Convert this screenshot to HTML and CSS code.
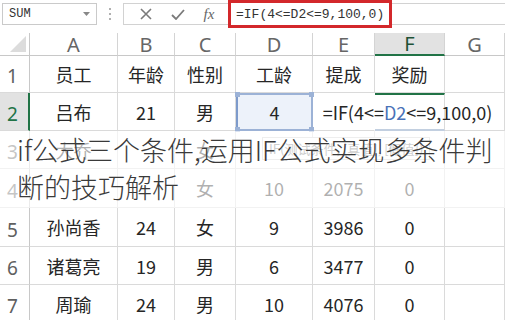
FILE: index.html
```html
<!DOCTYPE html>
<html>
<head>
    <title>IF公式多条件判断</title>
    <link rel="stylesheet" href="styles.css">
</head>
<body>
    <div class="toolbar">
        <div class="namebox">
            <span>SUM</span>
            <svg width="7" height="4" viewBox="0 0 7 4"><path d="M0 0h7L3.5 4z" fill="#888"/></svg>
        </div>
        <div class="grip"><i></i><i></i><i></i></div>
        <div class="fxbtns">
            <svg width="12" height="12" viewBox="0 0 12 12"><path d="M1 1l10 10M11 1L1 11" stroke="#7a7a7a" stroke-width="1.6" fill="none"/></svg>
            <svg width="14" height="11" viewBox="0 0 14 11"><path d="M1 6l4 4L13 1" stroke="#7a7a7a" stroke-width="1.8" fill="none"/></svg>
            <span class="fx">fx</span>
        </div>
        <div class="formula">=IF(4&lt;=D2&lt;=9,100,0)</div>
        <div class="fxrest"></div>
    </div>

    <div class="sheet">
        <div class="grid">
            <div class="c corner"><svg width="16" height="16" viewBox="0 0 16 16"><path d="M16 0v16H0z" fill="#dcdcdc"/></svg></div>
            <div class="c hd">A</div>
            <div class="c hd">B</div>
            <div class="c hd">C</div>
            <div class="c hd">D</div>
            <div class="c hd">E</div>
            <div class="c hd sel-col">F</div>
            <div class="c hd">G</div>

            <div class="c rh">1</div>
            <div class="c">员工</div>
            <div class="c">年龄</div>
            <div class="c">性别</div>
            <div class="c">工龄</div>
            <div class="c">提成</div>
            <div class="c">奖励</div>
            <div class="c"></div>

            <div class="c rh sel-row">2</div>
            <div class="c">吕布</div>
            <div class="c">21</div>
            <div class="c">男</div>
            <div class="c ref">4<i class="h tl"></i><i class="h tr"></i><i class="h bl"></i><i class="h br"></i></div>
            <div class="c open"></div>
            <div class="c active"><span>=IF(4&lt;=<b>D2</b>&lt;=9,100,0)</span></div>
            <div class="c"></div>

            <div class="c rh">3</div>
            <div class="c">大乔</div>
            <div class="c"></div>
            <div class="c">女</div>
            <div class="c"></div>
            <div class="c"></div>
            <div class="c"></div>
            <div class="c"></div>

            <div class="c rh">4</div>
            <div class="c"></div>
            <div class="c"></div>
            <div class="c">女</div>
            <div class="c">10</div>
            <div class="c">2075</div>
            <div class="c">0</div>
            <div class="c"></div>

            <div class="c rh">5</div>
            <div class="c">孙尚香</div>
            <div class="c">24</div>
            <div class="c">女</div>
            <div class="c">9</div>
            <div class="c">3986</div>
            <div class="c">0</div>
            <div class="c"></div>

            <div class="c rh">6</div>
            <div class="c">诸葛亮</div>
            <div class="c">19</div>
            <div class="c">男</div>
            <div class="c">6</div>
            <div class="c">3477</div>
            <div class="c">0</div>
            <div class="c"></div>

            <div class="c rh">7</div>
            <div class="c">周瑜</div>
            <div class="c">24</div>
            <div class="c">男</div>
            <div class="c">10</div>
            <div class="c">4076</div>
            <div class="c">0</div>
            <div class="c"></div>
        </div>

        <div class="tip">IF(测试条件, [真值], [假值])</div>

        <div class="veil">
            <p class="caption">if公式三个条件,运用IF公式实现多条件判<br>断的技巧解析</p>
        </div>
    </div>
</body>
</html>
```

FILE: styles.css
```css
body {
    margin: 0;
    width: 505px;
    height: 320px;
    overflow: hidden;
    background: #fff;
    font-family: "Noto Sans CJK SC", "Noto Sans", sans-serif;
    color: #222;
}

/* formula bar */
.toolbar {
    display: flex;
    align-items: flex-start;
    height: 33px;
}

.namebox {
    box-sizing: border-box;
    width: 95px;
    height: 22px;
    margin: 3px 0 0 2px;
    padding: 0 6px 0 6px;
    border: 1px solid #cacaca;
    display: flex;
    align-items: center;
    justify-content: space-between;
    font-family: "Liberation Mono", monospace;
    font-size: 12px;
    color: #333;
}

.grip {
    width: 26px;
    height: 22px;
    margin-top: 3px;
    display: flex;
    flex-direction: column;
    align-items: center;
    justify-content: center;
    gap: 3px;
}

.grip i {
    width: 2px;
    height: 2px;
    background: #b0b0b0;
}

.fxbtns {
    box-sizing: border-box;
    width: 105px;
    height: 22px;
    margin-top: 3px;
    border: 1px solid #d2d2d2;
    border-right: none;
    display: flex;
    align-items: center;
    justify-content: space-around;
    padding: 0 4px 0 6px;
}

.fx {
    font-family: "Liberation Serif", serif;
    font-style: italic;
    font-size: 15px;
    color: #666;
}

.formula {
    box-sizing: border-box;
    width: 164px;
    height: 28px;
    border: 3px solid #d3282b;
    padding-left: 5px;
    display: flex;
    align-items: center;
    font-family: "Liberation Mono", monospace;
    font-size: 13px;
    color: #333;
}

.fxrest {
    flex: 1;
    height: 22px;
    margin-top: 3px;
    border-top: 1px solid #d2d2d2;
    border-bottom: 1px solid #d2d2d2;
    box-sizing: border-box;
}

/* sheet */
.sheet {
    position: relative;
}

.grid {
    display: grid;
    grid-template-columns: 30px 88px 57px 61px 77px 62px 70px 60px;
    grid-template-rows: 23px 37px 38px 38px 39px 39px 38px 38px;
}

.c {
    box-sizing: border-box;
    border-right: 1px solid #dadada;
    border-bottom: 1px solid #dadada;
    display: flex;
    align-items: center;
    justify-content: center;
    font-size: 18px;
    color: #262626;
    white-space: nowrap;
}

.corner {
    border-right-color: #c8c8c8;
    border-bottom-color: #c8c8c8;
    justify-content: flex-end;
    align-items: flex-end;
    padding: 0 3px 3px 0;
}

.hd {
    font-family: "Noto Sans", sans-serif;
    font-size: 20px;
    color: #666;
    border-bottom-color: #c8c8c8;
    border-right-color: #d4d4d4;
}

.sel-col {
    background: #e2e2e2;
    color: #1f5236;
    border-bottom: 2px solid #217346;
}

.rh {
    font-family: "Noto Sans", sans-serif;
    font-size: 19px;
    color: #606060;
    justify-content: flex-start;
    align-items: flex-end;
    padding: 0 0 3px 7px;
    border-right-color: #c8c8c8;
}

.sel-row {
    background: #e2e2e2;
    color: #217346;
    border-right: 2px solid #217346;
}

.ref {
    position: relative;
    background: #edf2fa;
    border: 2px solid #9cb2d6;
    border-left-color: #7d9acb;
}

.h {
    position: absolute;
    width: 5px;
    height: 5px;
    background: #9cb2d6;
}

.tl { left: -3px; top: -3px; }
.tr { right: -3px; top: -3px; }
.bl { left: -3px; bottom: -3px; }
.br { right: -3px; bottom: -3px; }

.open {
    border-right-color: transparent;
}

.active {
    border-top: 2px solid #217346;
    border-bottom: 2px solid #c2cfe0;
    padding-left: 2px;
}

.active span {
    margin-left: -6px;
}

.active b {
    font-weight: normal;
    color: #4a72b8;
}

.tip {
    position: absolute;
    left: 262px;
    top: 104px;
    padding: 1px 6px;
    border: 1px solid #d0d0d0;
    background: #fff;
    font-size: 13px;
    color: #777;
}

.veil {
    position: absolute;
    left: 0;
    top: 98px;
    width: 505px;
    height: 77px;
    background: rgba(255, 255, 255, 0.64);
}

.caption {
    margin: 0;
    padding-left: 17px;
    font-size: 27px;
    font-weight: 300;
    line-height: 37px;
    color: #3a3a3a;
    white-space: nowrap;
}
```
